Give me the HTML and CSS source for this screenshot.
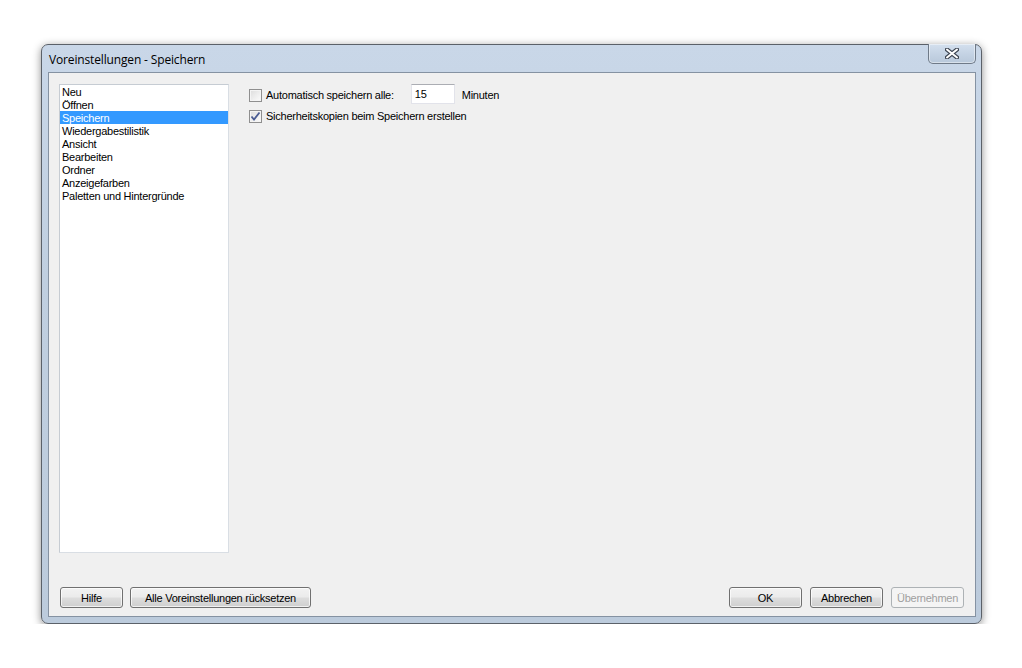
FILE: index.html
```html
<!DOCTYPE html>
<html lang="de">
<head>
<meta charset="utf-8">
<title>Voreinstellungen - Speichern</title>
<link rel="stylesheet" href="styles.css">
</head>
<body>
<div class="window">
  <div class="titlebar">
    <span class="title">Voreinstellungen - Speichern</span>
    <button class="close" aria-label="Schließen">
      <svg width="14" height="11" viewBox="0 0 14 11">
        <path d="M2 1.5 L12 9.5 M12 1.5 L2 9.5" stroke="#3b4350" stroke-width="4.2" stroke-linecap="round"/>
        <path d="M2 1.5 L12 9.5 M12 1.5 L2 9.5" stroke="#ffffff" stroke-width="2" stroke-linecap="round"/>
      </svg>
    </button>
  </div>
  <div class="client">
    <div class="main">
      <ul class="list">
        <li>Neu</li>
        <li>Öffnen</li>
        <li class="selected">Speichern</li>
        <li>Wiedergabestilistik</li>
        <li>Ansicht</li>
        <li>Bearbeiten</li>
        <li>Ordner</li>
        <li>Anzeigefarben</li>
        <li>Paletten und Hintergründe</li>
      </ul>
      <div class="settings">
        <div class="row row-auto">
          <span class="check"></span>
          <span class="label">Automatisch speichern alle:</span>
          <span class="input">15</span>
          <span class="unit">Minuten</span>
        </div>
        <div class="row row-backup">
          <span class="check checked">
            <svg width="11" height="11" viewBox="0 0 11 11">
              <path d="M1.5 5.5 L4 8.5 L9.5 1.5" fill="none" stroke="#4a5c93" stroke-width="1.8"/>
            </svg>
          </span>
          <span class="label">Sicherheitskopien beim Speichern erstellen</span>
        </div>
      </div>
    </div>
    <div class="buttons">
      <div class="group">
        <button class="btn btn-help">Hilfe</button>
        <button class="btn btn-reset">Alle Voreinstellungen rücksetzen</button>
      </div>
      <div class="group">
        <button class="btn">OK</button>
        <button class="btn">Abbrechen</button>
        <button class="btn disabled">Übernehmen</button>
      </div>
    </div>
  </div>
</div>
</body>
</html>
```
FILE: styles.css
```css
html, body {
  margin: 0;
  padding: 0;
  background: #ffffff;
}
body {
  padding: 44px 0 0 41px;
  font-family: "Liberation Sans", Arial, sans-serif;
  font-size: 11px;
  letter-spacing: -0.25px;
  color: #000;
}
.window {
  box-sizing: border-box;
  width: 941px;
  height: 580px;
  border: 1px solid #5b6169;
  border-radius: 7px;
  background: linear-gradient(180deg, #c9d7e8 0%, #c0cfe0 40%, #bccbdc 100%);
  box-shadow: 0 2px 9px rgba(0, 0, 0, 0.45);
  padding: 0 5px 6px 6px;
  display: flex;
  flex-direction: column;
}
.titlebar {
  height: 27px;
  display: flex;
  justify-content: space-between;
  align-items: flex-start;
}
.title {
  font-family: "Open Sans", "DejaVu Sans", sans-serif;
  font-size: 12px;
  line-height: 16px;
  margin: 7px 0 0 1px;
  color: #000;
  letter-spacing: -0.15px;
}
.close {
  box-sizing: border-box;
  width: 48px;
  height: 20px;
  margin: -1px 0 0 0;
  padding: 0;
  border: 1px solid #6f7a88;
  border-top: none;
  border-radius: 0 0 5px 5px;
  background: linear-gradient(180deg, #d4e0ee 0%, #c5d3e4 50%, #b8c8da 100%);
  box-shadow: inset 0 0 0 1px rgba(255, 255, 255, 0.45);
  display: flex;
  align-items: center;
  justify-content: center;
}
.client {
  flex: 1;
  border: 1px solid #8592a2;
  background: #f0f0f0;
  display: flex;
  flex-direction: column;
  padding: 11px 0 8px 0;
}
.main {
  flex: 1;
  display: flex;
  gap: 20px;
}
.list {
  list-style: none;
  margin: 0 0 0 10px;
  padding: 0;
  box-sizing: border-box;
  width: 170px;
  height: 469px;
  background: #fff;
  border: 1px solid #c6ccd3;
  border-right-color: #d9dee4;
  border-bottom-color: #d9dee4;
}
.list li {
  height: 13px;
  line-height: 15px;
  padding-left: 2px;
  white-space: nowrap;
}
.list li.selected {
  background: #3399ff;
  color: #fff;
}
.settings {
  display: flex;
  flex-direction: column;
}
.row {
  display: flex;
  align-items: center;
}
.row-auto {
  height: 20px;
}
.row-backup {
  margin-top: 5px;
  height: 14px;
}
.check {
  box-sizing: border-box;
  width: 13px;
  height: 13px;
  border: 1px solid #8f8f8f;
  background: linear-gradient(135deg, #dcdcdc 0%, #f0f0f0 60%, #fbfbfb 100%);
  box-shadow: inset 0 0 0 1px #f4f4f4;
  display: flex;
  align-items: center;
  justify-content: center;
  margin-top: 2px;
}
.row-backup .check {
  margin-top: 0;
}
.label {
  margin-left: 4px;
  margin-top: 2px;
}
.row-backup .label {
  margin-top: 0;
}
.input {
  box-sizing: border-box;
  width: 44px;
  height: 20px;
  margin-left: 17px;
  background: #fff;
  border: 1px solid #e2e3ea;
  border-top-color: #abadb3;
  padding-left: 3px;
  line-height: 18px;
}
.unit {
  margin-left: 7px;
  margin-top: 2px;
}
.buttons {
  display: flex;
  justify-content: space-between;
  padding: 0 11px 0 11px;
  margin-top: 34px;
}
.group {
  display: flex;
  gap: 8px;
}
.group:first-child {
  gap: 7px;
}
.btn {
  box-sizing: border-box;
  width: 73px;
  height: 21px;
  padding: 0;
  font-family: "Liberation Sans", Arial, sans-serif;
  font-size: 11px;
  letter-spacing: -0.25px;
  color: #000;
  border: 1px solid #707070;
  border-radius: 3px;
  background: linear-gradient(180deg, #f2f2f2 0%, #ebebeb 48%, #dddddd 52%, #cfcfcf 100%);
  box-shadow: inset 0 0 0 1px rgba(255, 255, 255, 0.7);
}
.btn-help {
  width: 63px;
}
.btn-reset {
  width: 181px;
}
.btn.disabled {
  color: #a0a0a0;
  border-color: #adb2b5;
  background: #f4f4f4;
  box-shadow: none;
}
```
